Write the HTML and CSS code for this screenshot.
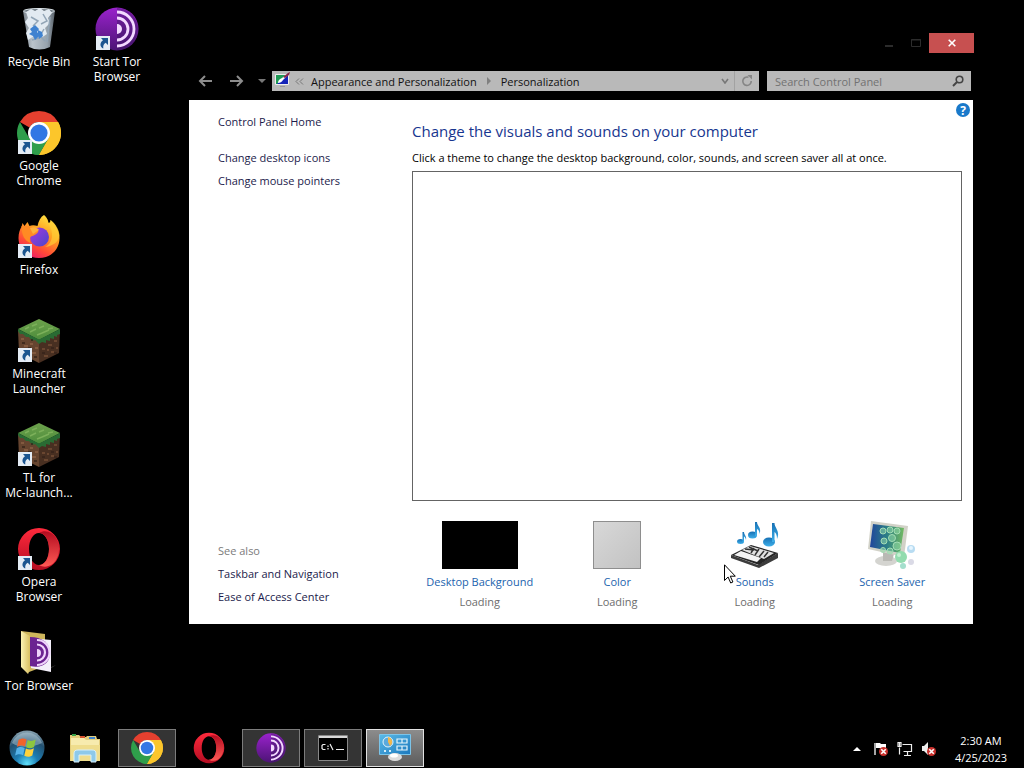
FILE: index.html
```html
<!DOCTYPE html>
<html lang="en">
<head>
<meta charset="utf-8">
<title>Personalization</title>
<link rel="stylesheet" href="styles.css">
</head>
<body>
<svg class="defs" aria-hidden="true">
  <defs>
    <linearGradient id="gTor" x1="0" y1="0" x2="0" y2="1"><stop offset="0" stop-color="#9a22cc"/><stop offset="1" stop-color="#4c1475"/></linearGradient>
    <linearGradient id="gOp" x1="0" y1="0" x2="0" y2="1"><stop offset="0" stop-color="#ff2a3c"/><stop offset="1" stop-color="#b40d22"/></linearGradient>
    <linearGradient id="gOp2" x1="0" y1="0" x2="0" y2="1"><stop offset="0" stop-color="#b30c20"/><stop offset="1" stop-color="#ff5a55"/></linearGradient>
    <linearGradient id="gFx" x1=".85" y1="0" x2=".3" y2="1"><stop offset="0" stop-color="#fff04a"/><stop offset=".4" stop-color="#ffa321"/><stop offset=".75" stop-color="#ff4b36"/><stop offset="1" stop-color="#ea1a68"/></linearGradient>
    <linearGradient id="gFx2" x1="0" y1="0" x2="1" y2="1"><stop offset="0" stop-color="#a43be0"/><stop offset="1" stop-color="#4a45c8"/></linearGradient>
    <linearGradient id="gBin" x1="0" y1="0" x2="1" y2="0"><stop offset="0" stop-color="#8a949d"/><stop offset=".3" stop-color="#cfd9e2"/><stop offset=".75" stop-color="#a9b6c1"/><stop offset="1" stop-color="#636c75"/></linearGradient>
    <linearGradient id="gFold" x1="0" y1="0" x2="1" y2="0"><stop offset="0" stop-color="#fbf3b4"/><stop offset="1" stop-color="#d8bf60"/></linearGradient>
    <radialGradient id="gOrb" cx=".5" cy=".95" r=".9"><stop offset="0" stop-color="#5fe0fa"/><stop offset=".35" stop-color="#1c7db4"/><stop offset=".75" stop-color="#23506f"/><stop offset="1" stop-color="#7e9aaa"/></radialGradient>
    <linearGradient id="gPane" x1="0" y1="0" x2="1" y2="1"><stop offset="0" stop-color="#5bbbe8"/><stop offset="1" stop-color="#1b78bd"/></linearGradient>
    <linearGradient id="gNote" x1="0" y1="0" x2="0" y2="1"><stop offset="0" stop-color="#1670b4"/><stop offset="1" stop-color="#3fb0ea"/></linearGradient>
    <linearGradient id="gScr" x1="0" y1="0" x2="1" y2="0"><stop offset="0" stop-color="#21469c"/><stop offset=".5" stop-color="#2c7f86"/><stop offset="1" stop-color="#74bb62"/></linearGradient>
    <linearGradient id="gTurf" x1="0" y1="0" x2="0" y2="1"><stop offset="0" stop-color="#6da14c"/><stop offset="1" stop-color="#4d8d3c"/></linearGradient>
  </defs>
  <symbol id="arrow" viewBox="0 0 14 14"><rect width="14" height="14" fill="#e4ecf5"/><path d="M5 2h7v7L9.700 6.800C7.600 8.200 7 9.800 7.300 12.500 4 11 3.200 7 7 4.200z" fill="#1b5590"/></symbol>
  <symbol id="chrome" viewBox="0 0 44 44"><path d="M22 0A22 22 0 0 1 41.050 11H22A11 11 0 0 0 12.500 16.500L2.950 11A22 22 0 0 1 22 0z" fill="#e5402f"/><path d="M2.950 11 12.470 27.500A11 11 0 0 0 22 33L22 44A22 22 0 0 1 2.950 11z" fill="#2f9e4b"/><path d="M22 44l9.530-16.500L30 22 41.050 11A22 22 0 0 1 22 44z" fill="#fcc62b"/><path d="M12.470 27.500 31.530 27.500 22 44A22 22 0 0 1 14 42z" fill="#2f9e4b"/><path d="M22 11h19.050A22 22 0 0 1 22 44L31.530 27.500z" fill="#fcc62b"/><circle cx="22" cy="22" r="11" fill="#fff"/><circle cx="22" cy="22" r="8.600" fill="#3277e4"/></symbol>
  <symbol id="tor" viewBox="0 0 44 44"><circle cx="22" cy="22" r="21.500" fill="url(#gTor)"/><path d="M22 1a21 21 0 0 1 0 42z" fill="#3a1760" opacity=".4"/><g fill="none" stroke="#f3d9ff" stroke-width="2.800"><path d="M22 5a17 17 0 0 1 0 34"/><path d="M22 11a11 11 0 0 1 0 22"/></g><path d="M22 17a5 5 0 0 1 0 10z" fill="#f3d9ff"/></symbol>
  <symbol id="opera" viewBox="0 0 44 44"><path d="M22 1a21 21 0 1 0 0 42 21 21 0 1 0 0-42zM22 6c5.800 0 10 7 10 16s-4.200 16-10 16-10-7-10-16 4.200-16 10-16z" fill="url(#gOp)" fill-rule="evenodd"/><path d="M22 6c7-4 14 0 17 5a21 21 0 0 1 0 22c-3 5-10 9-17 5 6 0 10-7 10-16S28 6 22 6z" fill="url(#gOp2)"/></symbol>
  <symbol id="grass" viewBox="0 0 44 44"><path d="M1 11 22 21V44L2 34z" fill="#65442f"/><path d="M43 11 22 21V44L42 34z" fill="#482f21"/><path d="M22 0 43 10 22 21 1 10z" fill="url(#gTurf)"/><path d="M1 10 22 20.500 43 10v5l-3 1v2l-3-1v3l-4-1v3l-4-1v3l-4-1-3 2-4-4-3 1-3-4-3 0-3-3-3 0-2-3z" fill="#296b33"/><path d="M8 10l4-2M15 7l5-2M13 13l6-3M22 9l5-2M25 14l7-3M31 10l5-1M20 16l5-2" stroke="#7cb05a" stroke-width="1.500"/><path d="M4 20h3M7 27h4M13 25h3M15 34h4M10 33h3M18 29h3M5 31h2" stroke="#82593f" stroke-width="2"/><path d="M25 30h3M31 26h4M37 22h3M27 37h4M34 33h3M39 29h2M30 31h2" stroke="#6a4630" stroke-width="2"/><path d="M5 24h3M11 29h3M17 38h3M25 34h3M34 29h3M37 34h3M14 21h2" stroke="#36231a" stroke-width="1.500"/></symbol>
  <symbol id="deny" viewBox="0 0 8 8"><circle cx="4" cy="4" r="4" fill="#c9302c"/><path d="M2 2l4 4M6 2L2 6" stroke="#fff" stroke-width="1.400"/></symbol>
</svg>

<main class="desktop">
  <div class="icons">
    <button class="icon"><svg class="pic" viewBox="0 0 48 48"><path d="M8 6 40 6 35 42Q24 47 14 42z" fill="url(#gBin)" opacity=".9"/><ellipse cx="24" cy="6" rx="15.500" ry="2.500" fill="#6d7881" stroke="#dde5ea"/><path d="M11 7l5-3 4 2 5-3 4 3 5-2 3 4-4 5 2 5-5 5 2 6-6 4-7-2-6 4-2-7 3-5-4-6 3-4z" fill="#e2eaf1"/><path d="M16 12l7 4-5 5M28 9l4 7-6 3M29 24l-4 7 5 5M17 35l7-2M35 12l-3 25" fill="none" stroke="#92a5b6" stroke-width="1.500"/><path d="M15 24l5-4 4 4-2 3 3 3-5 5-2-4-4-2 3-2zM23 25l4 2 1 4-4 3-1-4z" fill="#3f82d0"/></svg><span class="name">Recycle Bin</span></button>
    <button class="icon"><span class="pic"><svg class="logo"><use href="#chrome"/></svg><svg class="sc"><use href="#arrow"/></svg></span><span class="name">Google<br>Chrome</span></button>
    <button class="icon"><span class="pic"><svg class="logo" viewBox="0 0 44 44"><path d="M27 0c3 3 4 5 4.500 8 2 0 2-2 2-3 5 4 9 11 9 18 0 12-9 20-20.500 20S1.500 35 1.500 23c0-5 1.500-9 3-11l1-4 2 3 3-4 2 4c2-1 5-1 8 0 1-5 3-9 6.500-11z" fill="url(#gFx)"/><circle cx="22.500" cy="22" r="9.500" fill="url(#gFx2)"/><path d="M4.500 11c6 0 12 0 17 5-1 3-4 4-6 5-3 0-3 4-2 7-6-2-9-8-9-17z" fill="#ff8b24"/><path d="M13 13c4-2 8 0 9 2l-6 4z" fill="#ffb13a"/><path d="M27 0c2 7 9 12 8 22-1 5-3 8-7 10 9-1 14-6 14.500-12C42 14 38 8 33.500 5c0 2-1 3-2 3C31 5 30 3 27 0z" fill="#ffcf35" opacity=".65"/></svg><svg class="sc"><use href="#arrow"/></svg></span><span class="name">Firefox</span></button>
    <button class="icon"><span class="pic"><svg class="logo"><use href="#grass"/></svg><svg class="sc"><use href="#arrow"/></svg></span><span class="name">Minecraft<br>Launcher</span></button>
    <button class="icon"><span class="pic"><svg class="logo"><use href="#grass"/></svg><svg class="sc"><use href="#arrow"/></svg></span><span class="name">TL for<br>Mc-launch...</span></button>
    <button class="icon"><span class="pic"><svg class="logo"><use href="#opera"/></svg><svg class="sc"><use href="#arrow"/></svg></span><span class="name">Opera<br>Browser</span></button>
    <button class="icon"><svg class="pic" viewBox="0 0 48 48"><path d="M31 40l10-4-9 6z" fill="#333"/><path d="M6 2 30 5v32L14 43z" fill="#cdb55c"/><path d="M16 9 36 11V43L16 39z" fill="#f4f0fa"/><path d="M15 8c12 0 20 6 20 16s-8 16-20 13z" fill="#6b2391"/><g fill="none" stroke="#efd4fb" stroke-width="2.200"><path d="M22 11a12 12 0 0 1 0 25"/><path d="M22 15.500a8 8 0 0 1 0 16"/></g><path d="M22 20a4 4 0 0 1 0 8z" fill="#efd4fb"/><path d="M6 2 15 7V41L13 45 6 38z" fill="url(#gFold)"/></svg><span class="name">Tor Browser</span></button>
    <button class="icon"><span class="pic"><svg class="logo"><use href="#tor"/></svg><svg class="sc"><use href="#arrow"/></svg></span><span class="name">Start Tor<br>Browser</span></button>
  </div>

  <section class="window" aria-label="Personalization">
    <header class="titlebar">
      <button class="wbtn" aria-label="Minimize"><svg width="10" height="10"><path d="M1 7h8v2H1z" fill="#2c2c2c"/></svg></button>
      <button class="wbtn" aria-label="Maximize"><svg width="10" height="10"><path d="M.5 1.500h9v7h-9zM0 2h10" fill="none" stroke="#2c2c2c"/></svg></button>
      <button class="wbtn close" aria-label="Close"><svg width="8" height="8"><path d="M.7.700l6.600 6.600M7.300.700L.7 7.300" stroke="#fff" stroke-width="1.600"/></svg></button>
    </header>
    <nav class="navbar">
      <button class="nav" aria-label="Back"><svg width="14" height="12"><path d="M7 1L2 6l5 5M2 6h12" fill="none" stroke="#8d8d8d" stroke-width="2"/></svg></button>
      <button class="nav" aria-label="Forward"><svg width="14" height="12"><path d="M7 1l5 5-5 5M12 6H0" fill="none" stroke="#8d8d8d" stroke-width="2"/></svg></button>
      <button class="nav recent" aria-label="Recent locations"><svg width="8" height="4"><path d="M0 0h8L4 4z" fill="#777"/></svg></button>
      <div class="address">
        <svg class="cp" width="16" height="18" viewBox="0 0 16 18"><path d="M1.500 2.500h13v10h-13z" fill="#1423b8" stroke="#eee"/><path d="M2 3h10L3 12H2z" fill="#1d9a55"/><path d="M4 11c0-3 2-4 4-5l5-4 1 1-5 5c-1 2-3 3-5 3z" fill="#fff"/><path d="M9 5l5-4 2-1-1 3-4 3z" fill="#8a2348"/><path d="M6 14h5v1H6z" fill="#999"/></svg>
        <svg class="sep" width="9" height="7"><path d="M4 .5L1 3.500l3 3M8 .5l-3 3 3 3" fill="none" stroke="#777"/></svg>
        <button class="crumb">Appearance and Personalization</button>
        <svg class="tri" width="4" height="8"><path d="M0 0l4 4-4 4z" fill="#808080"/></svg>
        <button class="crumb last">Personalization</button>
        <button class="mini" aria-label="Previous locations"><svg width="8" height="6"><path d="M1 1l3 4 3-4" fill="none" stroke="#777" stroke-width="1.600"/></svg></button>
        <button class="mini refresh" aria-label="Refresh"><svg width="12" height="12"><path d="M7.500 2.300A4.200 4.200 0 1 0 10.200 6" fill="none" stroke="#858585" stroke-width="1.600"/><path d="M6.500 0h4.500v4.500z" fill="#858585"/></svg></button>
      </div>
      <label class="search"><input type="search" placeholder="Search Control Panel" aria-label="Search Control Panel"><svg width="12" height="12"><circle cx="7.500" cy="4.500" r="3.300" fill="none" stroke="#444" stroke-width="1.600"/><path d="M5 7L1 11" stroke="#444" stroke-width="2"/></svg></label>
    </nav>
    <div class="body">
      <aside class="side">
        <a class="home" href="#home">Control Panel Home</a>
        <a href="#icons">Change desktop icons</a>
        <a href="#pointers">Change mouse pointers</a>
        <span class="also">See also</span>
        <a href="#taskbar">Taskbar and Navigation</a>
        <a href="#ease">Ease of Access Center</a>
      </aside>
      <div class="content">
        <h1>Change the visuals and sounds on your computer</h1>
        <p class="hint">Click a theme to change the desktop background, color, sounds, and screen saver all at once.</p>
        <div class="themes" role="listbox" aria-label="Themes"></div>
        <div class="tiles">
          <div class="tile"><div class="thumb bg"></div><a href="#bg">Desktop Background</a><span>Loading</span></div>
          <div class="tile"><div class="thumb color"></div><a href="#color">Color</a><span>Loading</span></div>
          <div class="tile"><svg class="thumb" viewBox="0 0 48 48"><path d="M0 34 27 44 47 32v5L28 47 0 37z" fill="#3c3c3c"/><path d="M0 34 20 24 47 32 28 44z" fill="#262626"/><path d="M3 34l7-4 20 7-4 4z" fill="#f4f4f4"/><path d="M11 29l8-4 24 7-10 6z" fill="#e2e2e2"/><path d="M14 28l9 1M18 26l9 4M23 27l-3 5M28 28l-4 6M33 30l-5 6M37 31l-4 5" stroke="#333" stroke-width="1.500"/><g fill="url(#gNote)"><ellipse cx="9.500" cy="20.500" rx="3.500" ry="2.500"/><path d="M11.500 11h1.500c0 3 3 4 2 8-.5-2-1-3-2-3.500V21h-1.500z"/><ellipse cx="21.500" cy="14" rx="4.500" ry="3.500"/><path d="M24 1h2c0 4 5 6 2.500 12 0-3-1-4-2.500-5v7h-2z"/><ellipse cx="38" cy="21" rx="6" ry="4.500"/><path d="M41 2h2.500c0 5 6 8 2.500 16 0-4-1-6-2.500-7v10H41z"/></g></svg><a href="#sounds">Sounds</a><span>Loading</span></div>
          <div class="tile"><svg class="thumb" viewBox="0 0 48 48"><ellipse cx="18" cy="40" rx="11" ry="5" fill="#d4d4d0"/><path d="M15 31l11 2-2 7h-9z" fill="#b9b9b4"/><path d="M3 0 40 5 36 36 0 28z" fill="#d2d2c8"/><path d="M5 3 36 7 32 32 2 26z" fill="url(#gScr)"/><g fill="#8fd8a8" fill-opacity=".55" stroke="#a3dcb4"><circle cx="15" cy="10" r="3"/><circle cx="22" cy="9" r="3"/><circle cx="29" cy="10" r="3"/><circle cx="16" cy="20" r="3"/><circle cx="24" cy="17" r="3.500"/><circle cx="29" cy="25" r="4"/><circle cx="22" cy="30" r="3"/><circle cx="15" cy="29" r="2.500"/></g><circle cx="33" cy="36" r="6" fill="#92dcae"/><circle cx="43" cy="28" r="4" fill="#b8dcf2"/><circle cx="43" cy="27" r="2" fill="#e6f5ff"/><circle cx="43" cy="41" r="3" fill="#dadae6"/><circle cx="35" cy="45" r="3" fill="#a4dfcd"/><circle cx="31" cy="34" r="2" fill="#c5f0d1"/></svg><a href="#saver">Screen Saver</a><span>Loading</span></div>
        </div>
      </div>
      <button class="help" aria-label="Help">?</button>
    </div>
  </section>
</main>

<footer class="taskbar">
  <button class="start" aria-label="Start"><svg width="36" height="36" viewBox="0 0 36 36"><circle cx="18" cy="18" r="17.500" fill="url(#gOrb)"/><path d="M3 13a16 16 0 0 1 30 0c-8 4-22 6-30 0z" fill="#bcd2dd" opacity=".45"/><path d="M9.500 10c3-2 5-2 8-.5l-1.500 7c-3-1.500-5-1-8 .5z" fill="#f0632b"/><path d="M18.700 10c3 1.500 5 1 8-.5l-1.600 7.500c-3 1.500-5 1.500-8 .3z" fill="#8cc63f"/><path d="M7.700 18.300c3-1.800 5-1.800 8-.4l-1.600 7.300c-3-1.500-5-1.400-8 .3z" fill="#55b2e8"/><path d="M16.900 18.500c3 1.500 5 1.200 8-.3L23.300 25.500c-3 1.600-5 1.500-8 .3z" fill="#ffd23c"/></svg></button>
  <button class="task" aria-label="File Explorer"><svg width="32" height="30" viewBox="0 0 32 30"><path d="M1 2h9l2 2h5l1-1h9l1 3h3v22H1z" fill="#e3cd7c"/><path d="M3 1h4v2H3z" fill="#38a14a"/><path d="M11 3h5v2h-5z" fill="#d8542f"/><path d="M20 4h6v2h-6z" fill="#4186cf"/><path d="M2 5h13l2 2h13v21H2z" fill="#f7ebae"/><path d="M2 12h29v16H2z" fill="#efdd8d"/><path d="M5 29V21c0-3 1-4 4-4h14c3 0 4 1 4 4v8h-5v-7H10v7z" fill="#8ec9ea" stroke="#d6effa"/></svg></button>
  <button class="task open" aria-label="Google Chrome"><svg width="32" height="32"><use href="#chrome"/></svg></button>
  <button class="task" aria-label="Opera"><svg width="32" height="32"><use href="#opera"/></svg></button>
  <button class="task open" aria-label="Tor Browser"><svg width="30" height="30"><use href="#tor"/></svg></button>
  <button class="task open" aria-label="Command Prompt"><svg width="30" height="26" viewBox="0 0 30 26"><path d="M.5.500h29v25H.5z" fill="#000" stroke="#888"/><path d="M1 1h28v2H1z" fill="#d8d8d8"/><path d="M7.500 9.500H5l-1 1v3l1 1h2.500M10 10.500v1.500M10 13v1.500M12 9l3 6M18 14.500h8" fill="none" stroke="#eee" stroke-width="1.200"/></svg></button>
  <button class="task open active" aria-label="Personalization"><svg width="32" height="28" viewBox="0 0 32 28"><path d="M.5.500h31v20H.5z" fill="url(#gPane)" stroke="#7cc4e8"/><circle cx="9" cy="8" r="5" fill="#5aa9dc" stroke="#e5f5fc"/><path d="M9 8V3a5 5 0 0 1 2 9z" fill="#f2b64a"/><path d="M18 5h10v4H18zM18 12h10v4H18zM23 5v4M23 12v4" fill="none" stroke="#e5f5fc" stroke-width="1.200"/><path d="M6 16v2M11 16v2" stroke="#d5effb" stroke-width="2"/><ellipse cx="16" cy="23" rx="7" ry="4" fill="#dcdcdc"/><ellipse cx="15" cy="21.500" rx="4" ry="2" fill="#fff"/></svg></button>
  <div class="tray">
    <button aria-label="Show hidden icons"><svg width="8" height="4"><path d="M0 4h8L4 0z" fill="#fff"/></svg></button>
    <button aria-label="Action Center"><svg width="16" height="16"><path d="M2 2v12" stroke="#ddd" stroke-width="1.500"/><path d="M3 2h4l1 1h5v5H8L7 7H3z" fill="#fff"/><use href="#deny" x="6" y="6" width="9" height="9"/></svg></button>
    <button aria-label="Network"><svg width="16" height="16"><path d="M5.500 3.500h9v7h-8M10.500 11v3M7 14.500h7M2.500 6.500v7M1 1.500h3v4H1zM2.500 2v3" fill="none" stroke="#eee" stroke-width="1.200"/></svg></button>
    <button aria-label="Volume"><svg width="16" height="16"><path d="M1 5h2l4-4v13l-4-4H1z" fill="#eee"/><use href="#deny" x="6" y="6" width="9" height="9"/></svg></button>
    <time class="clock" datetime="2023-04-25T02:30">2:30 AM<br>4/25/2023</time>
  </div>
</footer>
<svg class="cursor" width="12" height="20" viewBox="0 0 12 20" aria-hidden="true"><path d="M.5.800v15.700l3.600-3.500 2.600 6 2.200-1-2.600-5.800h5z" fill="#fff" stroke="#000"/></svg>
</body>
</html>
```
FILE: styles.css
```css
* { box-sizing: border-box; }
body {
  margin: 0;
  min-height: 100vh;
  display: flex;
  flex-direction: column;
  background: #000;
  font: 11px/15px "Open Sans", "Noto Sans", sans-serif;
  position: relative;
  overflow: hidden;
}
button {
  border: 0;
  padding: 0;
  background: none;
  font: inherit;
  color: inherit;
  display: flex;
  align-items: center;
  justify-content: center;
}
a { text-decoration: none; }
svg { display: block; }
.defs { position: absolute; width: 0; height: 0; }

.desktop { flex: 1; position: relative; }
.icons {
  display: grid;
  grid-template-rows: repeat(7, 104px);
  grid-auto-columns: 78px;
  grid-auto-flow: column;
  font-size: 12px;
}
.icon {
  flex-direction: column;
  justify-content: flex-start;
  padding-top: 5px;
  color: #fff;
  white-space: nowrap;
}
.pic { width: 48px; height: 48px; display: block; position: relative; padding: 2px; }
svg.pic { padding: 0; }
.logo { width: 44px; height: 44px; }
.sc { position: absolute; left: 3px; bottom: 3px; width: 14px; height: 14px; }
.name { margin-top: 1px; text-align: center; }

.window { position: absolute; left: 189px; right: 51px; top: 33px; }
.titlebar { display: flex; justify-content: flex-end; height: 20px; margin-right: -1px; }
.wbtn { width: 27px; }
.close { width: 45px; background: #c75050; }
.navbar { display: flex; align-items: center; height: 20px; margin: 18px 2px 9px 0; }
.nav { width: 32px; height: 20px; }
.nav + .nav { width: 31px; }
.nav + .recent { width: 20px; }
.address {
  flex: 1;
  display: flex;
  align-items: center;
  height: 20px;
  padding-left: 2px;
  background: #b9b9b9;
}
.cp { margin-right: 5px; }
.sep { margin-right: 7px; }
.crumb { color: #111; white-space: nowrap; }
.tri { margin: 0 10px; }
.last { margin-right: auto; }
.mini { width: 19px; height: 20px; }
.refresh { width: 25px; border-left: 1px solid #a2a2a2; }
.search {
  display: flex;
  align-items: center;
  width: 204px;
  height: 20px;
  margin-left: 8px;
  padding: 0 7px 0 8px;
  background: #b9b9b9;
}
.search input {
  flex: 1;
  min-width: 0;
  border: 0;
  padding: 0;
  background: none;
  font: inherit;
}
.search input::placeholder { color: #727272; opacity: 1; }

.body {
  display: flex;
  position: relative;
  background: #fff;
  padding: 10px 11px 12px 29px;
}
.side { width: 194px; display: flex; flex-direction: column; line-height: 23px; padding-bottom: 4px; }
.side a { color: #1b1b4b; }
.home { margin-bottom: 13px; }
.also { margin-top: auto; color: #7b7b7b; }
.content { flex: 1; min-width: 0; padding-top: 9px; }
h1 { margin: 0; font-size: 15px; line-height: 24px; font-weight: 400; color: #17368f; }
.hint { margin: 6px 0 4px; line-height: 18px; white-space: nowrap; color: #000; }
.themes { height: 330px; border: 1px solid #646464; }
.tiles { display: grid; grid-template-columns: repeat(4, 1fr); margin: 20px 1px 0 -1px; line-height: 20px; }
.tile { display: flex; flex-direction: column; align-items: center; color: #6d6d6d; }
.tile a { color: #1b63ae; }
.thumb { width: 48px; height: 48px; margin-bottom: 3px; }
.bg { width: 76px; background: #000; }
.color { border: 1px solid #8e8e8e; background: linear-gradient(135deg, #d8d8d8, #c2c2c2); }
.help {
  position: absolute;
  top: 3px;
  right: 3px;
  width: 14px;
  height: 14px;
  border-radius: 50%;
  background: #1979ca;
  color: #fff;
  font-size: 12px;
  font-weight: 700;
}

.taskbar { display: flex; align-items: center; height: 40px; gap: 4px; }
.start { width: 52px; padding-left: 2px; }
.task { width: 58px; height: 38px; }
.open { background: #343434; border: 1px solid #7c7c7c; }
.active { background: linear-gradient(#8c8c8c, #5c5c5c); border-color: #e2e2e2; }
.tray { margin-left: auto; display: flex; align-items: center; gap: 8px; color: #fff; padding-top: 2px; }
.tray button:first-child { margin-right: 4px; }
.clock { margin: 0 17px 0 10px; text-align: center; line-height: 17px; }
.cursor { position: absolute; left: 724px; top: 564px; }
```
